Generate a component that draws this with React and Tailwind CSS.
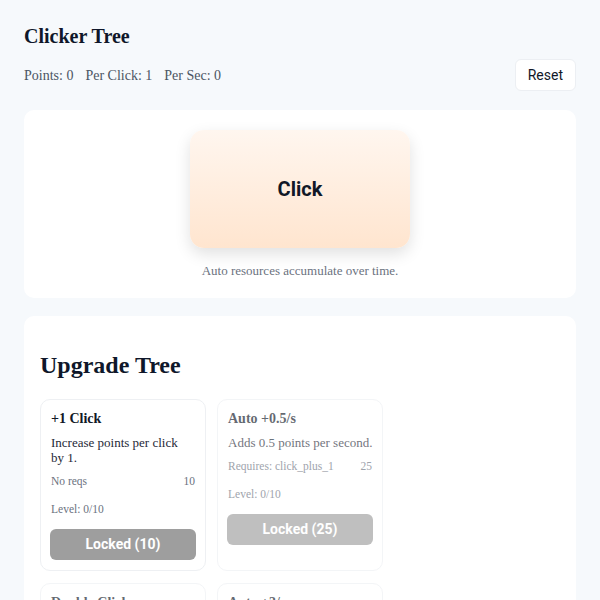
const upgrades = [
  [
    {
      name: "+1 Click",
      desc: "Increase points per click\nby 1.",
      req: "No reqs",
      cost: 10,
      level: "0/10",
      locked: false,
    },
    {
      name: "Auto +0.5/s",
      desc: "Adds 0.5 points per second.",
      req: "Requires: click_plus_1",
      cost: 25,
      level: "0/10",
      locked: true,
    },
  ],
  [
    {
      name: "Double Click",
      desc: "Doubles points per click.",
      req: "Requires: click_plus_1",
      cost: 100,
      level: "0/1",
      locked: true,
    },
    {
      name: "Auto +3/s",
      desc: "Adds 3 points per second.",
      req: "Requires: auto_half",
      cost: 150,
      level: "0/10",
      locked: true,
    },
  ],
];

function UpgradeCard({ u }) {
  return (
    <div
      className={`rounded-[10px] border border-[#eef0f3] bg-white px-[9px] pt-[9px] pb-[10px] ${
        u.locked ? "opacity-[0.65]" : ""
      }`}
    >
      <div className="pl-[1px] text-[14px] font-bold leading-[20px] text-[#111827]">{u.name}</div>
      <div className="mt-[6px] whitespace-pre-line pl-[1px] text-[13px] leading-[15px] text-[#1f2937]">
        {u.desc}
      </div>
      <div className="mt-[8px] flex items-center justify-between px-[1px] text-[11.5px] leading-[16px] text-[#6b7280]">
        <span>{u.req}</span>
        <span>{u.cost}</span>
      </div>
      <div className="mt-[12px] pl-[1px] text-[11.5px] leading-[16px] text-[#6b7280]">Level: {u.level}</div>
      <button
        type="button"
        className="mt-[12px] h-[31px] w-full rounded-[6px] bg-[#9e9e9e] font-['Roboto',sans-serif] text-[14px] font-bold text-white"
      >
        Locked ({u.cost})
      </button>
    </div>
  );
}

export default function App() {
  return (
    <div className="min-h-screen bg-[#f6f9fc] px-6 pt-[22px] pb-6 font-['Liberation_Serif','Times_New_Roman',serif]">
      {/* header */}
      <h1 className="text-[20px] font-bold leading-[28px] text-[#0f172a]">Clicker Tree</h1>
      <div className="mt-[9px] flex items-center justify-between">
        <div className="flex gap-[12px] text-[14px] text-[#4b5563]">
          <span>Points: 0</span>
          <span>Per Click: 1</span>
          <span>Per Sec: 0</span>
        </div>
        <button
          type="button"
          className="h-[32px] rounded-[6px] border border-[#eceff3] bg-white px-[12px] font-['Roboto',sans-serif] text-[14px] text-[#111827]"
        >
          Reset
        </button>
      </div>

      {/* click area */}
      <div className="mt-[19px] flex flex-col items-center rounded-[10px] bg-white pt-[20px] pb-[17px]">
        <button
          type="button"
          className="flex h-[118px] w-[220px] items-center justify-center rounded-[14px] bg-gradient-to-b from-[#fff6ef] to-[#ffe5cf] font-['Roboto',sans-serif] text-[20px] font-bold text-[#111827] shadow-[0_6px_16px_rgba(0,0,0,0.12)]"
        >
          Click
        </button>
        <div className="mt-[13px] text-[13px] text-[#6b7280]">Auto resources accumulate over time.</div>
      </div>

      {/* upgrade tree */}
      <div className="mt-[18px] rounded-[10px] bg-white px-4 pt-[33px] pb-4">
        <h2 className="text-[24px] font-bold leading-[32px] text-[#0f172a]">Upgrade Tree</h2>
        <div className="mt-[18px] flex flex-col gap-[12px]">
          {upgrades.map((row, i) => (
            <div key={i} className="grid grid-cols-3 gap-[11px]">
              {row.map((u) => (
                <UpgradeCard key={u.name} u={u} />
              ))}
            </div>
          ))}
        </div>
      </div>
    </div>
  );
}
